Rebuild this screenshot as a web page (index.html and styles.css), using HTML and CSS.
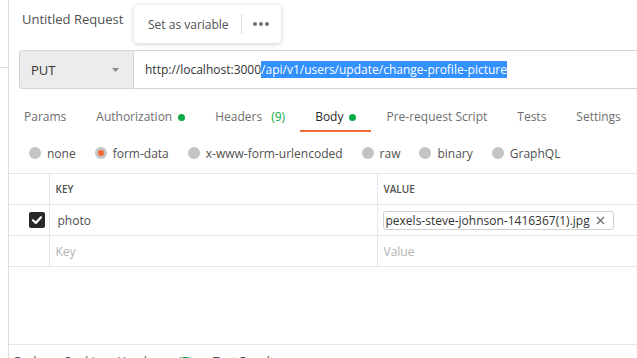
FILE: index.html
```html
<!DOCTYPE html>
<html lang="en">
<head>
    <meta charset="UTF-8">
    <meta name="viewport" content="width=device-width, initial-scale=1.0">
    <title>Untitled Request</title>
    <link rel="stylesheet" href="styles.css">
</head>
<body>
    <div class="app">
        <div class="sidebar">
            <div class="sidebar-top"></div>
        </div>

        <div class="main">
            <div class="titlebar">
                <span class="title">Untitled Request</span>
                <!-- selection popup -->
                <div class="popup">
                    <span>Set as variable</span>
                    <span class="popup-sep"></span>
                    <svg width="16" height="4" viewBox="0 0 16 4"><circle cx="2" cy="2" r="2" fill="#707070"/><circle cx="8" cy="2" r="2" fill="#707070"/><circle cx="14" cy="2" r="2" fill="#707070"/></svg>
                </div>
            </div>

            <div class="urlbar">
                <div class="method">
                    <span>PUT</span>
                    <svg width="7" height="4" viewBox="0 0 7 4"><path d="M0 0 L7 0 L3.5 4 Z" fill="#8a8a8a"/></svg>
                </div>
                <div class="url">http://localhost:3000<span class="selected">/api/v1/users/update/change-profile-picture</span></div>
            </div>

            <div class="tabs">
                <div class="tab">Params</div>
                <div class="tab">Authorization<span class="dot"></span></div>
                <div class="tab">Headers<span class="count">(9)</span></div>
                <div class="tab active">Body<span class="dot"></span></div>
                <div class="tab">Pre-request Script</div>
                <div class="tab">Tests</div>
                <div class="tab">Settings</div>
            </div>

            <div class="body-types">
                <label class="radio"><span class="circle"></span>none</label>
                <label class="radio checked"><span class="circle"></span>form-data</label>
                <label class="radio"><span class="circle"></span>x-www-form-urlencoded</label>
                <label class="radio"><span class="circle"></span>raw</label>
                <label class="radio"><span class="circle"></span>binary</label>
                <label class="radio"><span class="circle"></span>GraphQL</label>
            </div>

            <table class="params">
                <colgroup>
                    <col class="col-check">
                    <col class="col-key">
                    <col class="col-value">
                </colgroup>
                <thead>
                    <tr>
                        <th></th>
                        <th>KEY</th>
                        <th>VALUE</th>
                    </tr>
                </thead>
                <tbody>
                    <tr>
                        <td class="cell-check">
                            <span class="checkbox">
                                <svg width="16" height="16" viewBox="0 0 16 16"><path d="M4 8.3 L6.8 11 L12 5.2" stroke="#fff" stroke-width="2.2" fill="none" stroke-linecap="round" stroke-linejoin="round"/></svg>
                            </span>
                        </td>
                        <td class="key">photo</td>
                        <td>
                            <div class="file">
                                <span>pexels-steve-johnson-1416367(1).jpg</span>
                                <svg width="9" height="9" viewBox="0 0 9 9"><path d="M1 1 L8 8 M8 1 L1 8" stroke="#6b6b6b" stroke-width="1.3"/></svg>
                            </div>
                        </td>
                    </tr>
                    <tr>
                        <td></td>
                        <td class="placeholder">Key</td>
                        <td class="placeholder">Value</td>
                    </tr>
                </tbody>
            </table>

            <div class="spacer"></div>

            <div class="response-tabs">
                <span class="rtab">Body</span>
                <span class="rtab rtab-cookies">Cookies</span>
                <span class="rtab">Headers<span class="count rcount">(7)</span></span>
                <span class="rtab">Test Results</span>
            </div>
        </div>
    </div>
</body>
</html>
```

FILE: styles.css
```css
html, body {
    margin: 0;
    height: 100%;
    overflow: hidden;
}

body {
    font-family: "Open Sans", "Liberation Sans", sans-serif;
    font-size: 12px;
    color: #505050;
    background: #fff;
}

.app {
    display: flex;
    height: 358px;
}

.sidebar {
    width: 8px;
    border-right: 1px solid #dedede;
    flex-shrink: 0;
}

.sidebar-top {
    height: 67px;
    border-bottom: 1px solid #dedede;
}

.main {
    flex: 1;
    min-width: 0;
    overflow: hidden;
}

/* title */
.titlebar {
    position: relative;
    height: 50px;
    box-sizing: border-box;
    padding: 10px 0 0 13px;
}

.title {
    font-size: 13px;
    line-height: 18px;
    color: #505050;
}

.popup {
    position: absolute;
    left: 125px;
    top: 5px;
    width: 147px;
    height: 38px;
    box-sizing: border-box;
    padding-left: 14px;
    display: flex;
    align-items: center;
    background: #fff;
    border-radius: 4px;
    box-shadow: 0 1px 5px rgba(0,0,0,0.2);
    font-size: 12px;
    color: #505050;
}

.popup-sep {
    width: 1px;
    height: 20px;
    background: #dcdcdc;
    margin: 0 11px 0 12px;
}

/* url bar */
.urlbar {
    display: flex;
    height: 39px;
    margin-left: 10px;
}

.method {
    width: 115px;
    box-sizing: border-box;
    display: flex;
    align-items: center;
    justify-content: space-between;
    padding: 0 14px 0 11px;
    background: #ececec;
    border: 1px solid #d4d4d4;
    border-radius: 3px 0 0 3px;
    font-size: 13px;
    color: #333;
}

.url {
    flex: 1;
    display: flex;
    align-items: center;
    padding-left: 11px;
    border-top: 1px solid #d4d4d4;
    border-bottom: 1px solid #d4d4d4;
    white-space: nowrap;
    color: #333;
}

.selected {
    background: #3390ff;
    color: #fff;
    line-height: 17px;
}

/* request tabs */
.tabs {
    display: flex;
    height: 43px;
}

.tab {
    display: flex;
    align-items: flex-start;
    box-sizing: border-box;
    padding: 20px 15px 0;
    line-height: 16px;
    color: #6e6e6e;
    border-bottom: 2px solid transparent;
    white-space: nowrap;
}

.tab.active {
    color: #282828;
    border-bottom-color: #f26b3a;
}

.dot {
    display: inline-block;
    width: 7px;
    height: 7px;
    border-radius: 50%;
    background: #0cab46;
    margin: 5px 0 0 6px;
}

.count {
    color: #0cab46;
    margin-left: 9px;
}

/* body type radios */
.body-types {
    display: flex;
    height: 41px;
    box-sizing: border-box;
    padding: 13px 0 0 20px;
}

.radio {
    display: flex;
    align-items: center;
    height: 16px;
    margin-right: 19px;
    color: #505050;
}

.circle {
    width: 12px;
    height: 12px;
    border-radius: 50%;
    background: #c4c4c4;
    margin-right: 6px;
    display: flex;
    align-items: center;
    justify-content: center;
}

.radio.checked .circle::after {
    content: "";
    width: 6px;
    height: 6px;
    border-radius: 50%;
    background: #f26b3a;
}

/* params table */
.params {
    width: 100%;
    border-collapse: collapse;
    table-layout: fixed;
}

.col-check { width: 40px; }
.col-key { width: 328px; }

.params th,
.params td {
    height: 30px;
    padding: 0 0 0 6px;
    border: 1px solid #e6e6e6;
    border-left: none;
    text-align: left;
    white-space: nowrap;
    overflow: hidden;
}

.params tr > :last-child {
    border-right: none;
}

.params th {
    font-size: 10px;
    font-weight: 600;
    color: #505050;
}

.params td.key {
    padding-left: 8px;
    color: #505050;
}

.params td.cell-check {
    padding: 0 0 0 20px;
}

.checkbox {
    display: block;
    width: 16px;
    height: 16px;
    background: #282828;
    border-radius: 2px;
}

.checkbox svg {
    display: block;
}

.file {
    display: inline-flex;
    align-items: center;
    margin-left: -1px;
    width: 231px;
    height: 19px;
    box-sizing: border-box;
    padding: 0 8px 0 2px;
    justify-content: space-between;
    border: 1px solid #cfcfcf;
    border-radius: 3px;
    color: #333;
}

.placeholder {
    color: #b3b3b3;
}

.spacer {
    height: 77px;
    border-bottom: 1px solid #e6e6e6;
}

/* response tabs */
.response-tabs {
    display: flex;
    padding: 9px 0 0 5px;
    line-height: 16px;
    color: #505050;
    white-space: nowrap;
}

.rtab {
    margin-right: 21px;
}

.rtab-cookies {
    margin-right: 10px;
}

.rcount {
    margin-left: 14px;
}
```
